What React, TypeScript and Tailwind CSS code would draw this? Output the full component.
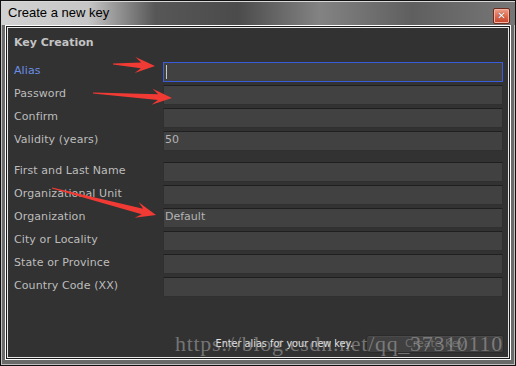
import React from "react";

const firstGroup = [
  { label: "Alias", value: "", focused: true },
  { label: "Password", value: "" },
  { label: "Confirm", value: "" },
  { label: "Validity (years)", value: "50" },
];

const secondGroup = [
  { label: "First and Last Name", value: "" },
  { label: "Organizational Unit", value: "" },
  { label: "Organization", value: "Default" },
  { label: "City or Locality", value: "" },
  { label: "State or Province", value: "" },
  { label: "Country Code (XX)", value: "" },
];

type Row = { label: string; value: string; focused?: boolean };

function FieldRow({ row }: { row: Row }) {
  return (
    <div className="flex h-[20px]">
      <div
        className={`w-[149px] shrink-0 pt-[1px] leading-[16px] tracking-[0.1px] ${
          row.focused ? "text-[#6a8fe6]" : "text-[#bdbdbd]"
        }`}
      >
        {row.label}
      </div>
      <div
        className={`w-[340px] h-[20px] bg-[#414141] border pl-[1px] leading-[15px] text-[#b4b4b4] ${
          row.focused ? "border-[#3a5cd8]" : "border-[#303030] border-t-[#1f1f1f]"
        }`}
      >
        {row.focused ? (
          <div className="ml-[1px] mt-[2px] w-px h-[14px] bg-[#c8c8c8]" />
        ) : (
          row.value
        )}
      </div>
    </div>
  );
}

// red annotation arrow: thin tail widening into a wedge head
function arrowPoints(x0: number, y0: number, x1: number, y1: number) {
  const dx = x1 - x0;
  const dy = y1 - y0;
  const len = Math.hypot(dx, dy);
  const ux = dx / len;
  const uy = dy / len;
  const nx = -uy;
  const ny = ux;
  const L = 20;
  const hw = 8;
  const at = (d: number, w: number) => `${x0 + ux * d + nx * w},${y0 + uy * d + ny * w}`;
  return [
    at(0, 0.4),
    at(len - L * 0.7, 2.8),
    at(len - L, hw),
    at(len, 0),
    at(len - L, -hw),
    at(len - L * 0.7, -2.8),
    at(0, -0.4),
  ].join(" ");
}

export default function App() {
  return (
    <div className="relative w-[516px] h-[366px] overflow-hidden font-['DejaVu_Sans',sans-serif] text-[11px]">
      <div className="w-full h-full flex flex-col border border-[#111] bg-[#6a6a6a] shadow-[inset_0_0_0_1px_#bfbfbf] px-[4px] pb-[5px]">
        {/* Title bar */}
        <div className="h-[24px] -mx-[4px] flex items-center justify-between pl-[7px] pr-[5px] bg-[linear-gradient(90deg,#d2d2d2_0%,#c6c6c6_17%,#9a9a9a_22%,#575757_30%,#4b4b4b_46%,#838383_62%,#5f5f5f_80%,#777777_100%)] shadow-[inset_0_1px_0_#d8d8d8]">
          <span className="font-['Liberation_Sans',sans-serif] text-[13px] text-black">Create a new key</span>
          <div className="w-[17px] h-[16px] mt-[5px] rounded-[2px] border border-[#6b2b1e] shadow-[inset_0_0_0_1px_#f2b3a3] bg-[linear-gradient(180deg,#eea08b_0%,#df6a4e_50%,#c4432a_100%)] flex items-center justify-center text-white text-[10px] font-bold leading-none [text-shadow:0_0_1px_#333]">
            ✕
          </div>
        </div>

        {/* Panel */}
        <div className="flex-1 border border-white">
          <div className="h-full border border-[#1c1c1c]">
            <div className="h-full border border-[#e8e8e8] bg-[#323232] flex flex-col pl-[6px]">
              <div className="pt-[7px] leading-[16px] font-bold text-[#c4c4c4]">Key Creation</div>

              <div className="mt-[11px] flex flex-col gap-[3px]">
                {firstGroup.map((r) => (
                  <FieldRow key={r.label} row={r} />
                ))}
              </div>

              <div className="mt-[11px] flex flex-col gap-[3px]">
                {secondGroup.map((r) => (
                  <FieldRow key={r.label} row={r} />
                ))}
              </div>

              <div className="flex-1" />

              <div className="flex items-center justify-end gap-[13px] pr-[4px] pb-[4px]">
                <span className="text-[9.7px] text-[#e4e4e4]">Enter alias for your new key.</span>
                <div className="w-[138px] h-[18px] rounded-[3px] bg-[#404040] border border-[#2b2b2b] shadow-[inset_0_1px_0_#4a4a4a] flex items-center justify-center text-[11px] text-[#6f6f6f]">
                  Create Key
                </div>
              </div>
            </div>
          </div>
        </div>
      </div>

      {/* annotations */}
      <svg className="absolute inset-0 pointer-events-none" width="516" height="366">
        <polygon points={arrowPoints(113, 64, 155, 66)} fill="#f23a35" />
        <polygon points={arrowPoints(93, 93, 172, 98)} fill="#f23a35" />
        <polygon points={arrowPoints(52, 188, 156, 215)} fill="#f23a35" />
      </svg>

      {/* watermark */}
      <div className="absolute left-[175px] top-[332px] font-['Liberation_Serif',serif] text-[22px] leading-[24px] tracking-[0.7px] text-[rgba(175,175,175,0.55)] pointer-events-none whitespace-nowrap">
        https://blog.csdn.net/qq_37310110
      </div>
    </div>
  );
}
